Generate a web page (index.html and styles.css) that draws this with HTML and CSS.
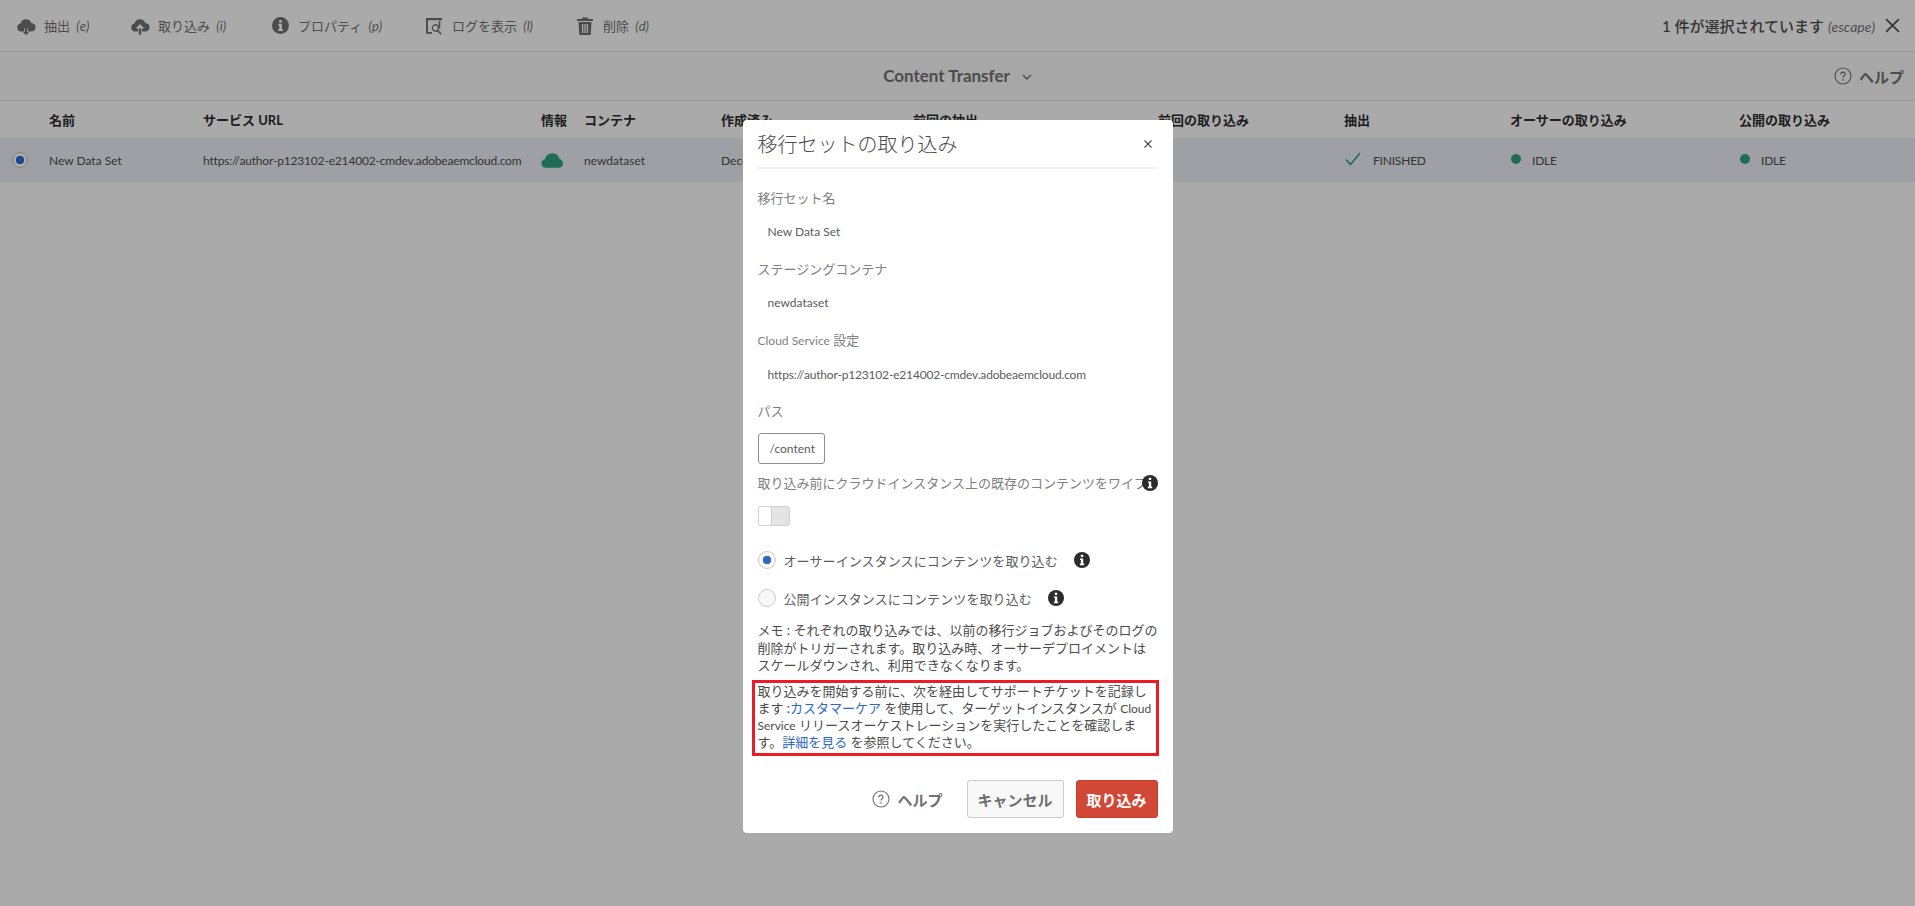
FILE: index.html
```html
<!DOCTYPE html>
<html lang="ja">
<head>
    <meta charset="UTF-8">
    <title>Content Transfer</title>
    <link rel="stylesheet" href="styles.css">
</head>
<body>
    <svg class="defs" width="0" height="0">
        <symbol id="info" viewBox="0 0 16 16">
            <circle cx="8" cy="8" r="8" fill="currentColor"/>
            <path fill="#fff" d="M6.8 2.8h2.4v2.3H6.8zM6 6.4h3.2v5.2h1v1.6H5.9v-1.6h1V8H6z"/>
        </symbol>
        <symbol id="help" viewBox="0 0 18 18">
            <circle cx="9" cy="9" r="8" fill="none" stroke="currentColor" stroke-width="1.1"/>
            <path fill="none" stroke="currentColor" stroke-width="1.2" d="M6.9 7.2c0-1.3 1-2.1 2.1-2.1s2.1.8 2.1 2c0 1.700-2.100 1.700-2.100 3.500"/>
            <circle cx="9" cy="12.900" r=".8" fill="currentColor"/>
        </symbol>
    </svg>

    <div class="toolbar">
        <div class="tool tool-extract">
            <svg class="tool-icon" viewBox="0 0 20 20"><path d="M5 15.500a4 4 0 0 1-.6-7.900 5.700 5.700 0 0 1 11-.3 4.100 4.100 0 0 1 .1 8.200h-3.500v-3h-4v3z"/><path d="M8.800 11.500h2.400v4.400h2l-3.200 3.400-3.200-3.400h2z"/></svg>
            <span>抽出 <i>(e)</i></span>
        </div>
        <div class="tool tool-ingest">
            <svg class="tool-icon" viewBox="0 0 20 20"><path d="M5 15.500a4 4 0 0 1-.6-7.900 5.700 5.700 0 0 1 11-.3 4.100 4.100 0 0 1 .1 8.200h-3.600v-3h2.400L10 8l-4.300 4.500h2.400v3z"/><path d="M8.800 12.500h2.400v6.300H8.800z"/></svg>
            <span>取り込み <i>(i)</i></span>
        </div>
        <div class="tool tool-props">
            <svg class="tool-icon info-tool"><use href="#info"/></svg>
            <span>プロパティ <i>(p)</i></span>
        </div>
        <div class="tool tool-log">
            <svg class="tool-icon" viewBox="0 0 20 20"><path d="M2 2h16v2.200H4V16h4v1.800H2z"/><path d="M16.300 5v7h-1.600V5z"/><path fill-rule="evenodd" d="M11.500 8a4 4 0 0 1 3.200 6.400l3.100 3.100-1.200 1.200-3.100-3.100A4 4 0 1 1 11.500 8zm0 1.600a2.400 2.400 0 1 0 0 4.800 2.400 2.400 0 0 0 0-4.800z"/></svg>
            <span>ログを表示 <i>(l)</i></span>
        </div>
        <div class="tool tool-delete">
            <svg class="tool-icon" viewBox="0 0 20 20"><path d="M7 1.500h6V3h5v2H2V3h5z"/><path fill-rule="evenodd" d="M3.500 6h13l-.8 13H4.300zM7 8v9h1.300V8zm2.400 0v9h1.200V8zm2.300 0v9H13V8z"/></svg>
            <span>削除 <i>(d)</i></span>
        </div>
        <div class="selection">
            <span><b>1 件が選択されています</b> <i>(escape)</i></span>
            <svg class="close-icon" viewBox="0 0 14 14"><path d="M1 1l12 12M13 1L1 13" fill="none" stroke="currentColor" stroke-width="1.600"/></svg>
        </div>
    </div>

    <div class="titlebar">
        <div class="page-title">
            Content Transfer
            <svg class="chevron" viewBox="0 0 10 6"><path d="M1 1l4 4 4-4" fill="none" stroke="currentColor" stroke-width="1.400"/></svg>
        </div>
        <div class="page-help">
            <svg class="help-icon"><use href="#help"/></svg>
            <b>ヘルプ</b>
        </div>
    </div>

    <div class="table-row table-head">
        <div>名前</div>
        <div>サービス URL</div>
        <div>情報</div>
        <div>コンテナ</div>
        <div>作成済み</div>
        <div>前回の抽出</div>
        <div>前回の取り込み</div>
        <div>抽出</div>
        <div>オーサーの取り込み</div>
        <div>公開の取り込み</div>
    </div>
    <div class="table-row table-selected">
        <span class="row-radio"></span>
        <div>New Data Set</div>
        <div class="url">https://author-p123102-e214002-cmdev.adobeaemcloud.com</div>
        <div class="cloud-cell">
            <svg class="cloud" viewBox="0 0 22 14"><path d="M4.500 14a4.200 4.200 0 0 1-.8-8.300A7.200 7.200 0 0 1 11 0a6.800 6.800 0 0 1 6.700 5.600A4.300 4.300 0 0 1 17.500 14z"/></svg>
        </div>
        <div>newdataset</div>
        <div>December</div>
        <div></div>
        <div></div>
        <div class="status">
            <svg class="check" viewBox="0 0 16 14"><path d="M1 7.500l4.500 5L15 1" fill="none" stroke="currentColor" stroke-width="1.600"/></svg>
            FINISHED
        </div>
        <div class="status"><span class="dot"></span>IDLE</div>
        <div class="status"><span class="dot"></span>IDLE</div>
    </div>

    <div class="overlay">
        <div class="modal">
            <div class="modal-head">
                <h2>移行セットの取り込み</h2>
                <svg class="modal-close" viewBox="0 0 10 10"><path d="M1.500 1.500l7 7M8.500 1.500l-7 7" fill="none" stroke="currentColor" stroke-width="1.100"/></svg>
            </div>

            <div class="field">
                <label>移行セット名</label>
                <div class="value">New Data Set</div>
            </div>
            <div class="field">
                <label>ステージングコンテナ</label>
                <div class="value">newdataset</div>
            </div>
            <div class="field">
                <label><small>Cloud Service</small> 設定</label>
                <div class="value url">https://author-p123102-e214002-cmdev.adobeaemcloud.com</div>
            </div>

            <label class="path-label">パス</label>
            <div class="path-input">/content</div>

            <div class="wipe-row">
                <label>取り込み前にクラウドインスタンス上の既存のコンテンツをワイプ</label>
                <svg class="info-icon"><use href="#info"/></svg>
            </div>
            <div class="toggle"><span></span></div>

            <div class="radio-row radio-author">
                <span class="radio radio-on"></span>
                <span>オーサーインスタンスにコンテンツを取り込む</span>
                <svg class="info-icon"><use href="#info"/></svg>
            </div>
            <div class="radio-row radio-publish">
                <span class="radio"></span>
                <span>公開インスタンスにコンテンツを取り込む</span>
                <svg class="info-icon"><use href="#info"/></svg>
            </div>

            <p class="memo">メモ : それぞれの取り込みでは、以前の移行ジョブおよびそのログの<br>削除がトリガーされます。取り込み時、オーサーデプロイメントは<br>スケールダウンされ、利用できなくなります。</p>
            <p class="notice">取り込みを開始する前に、次を経由してサポートチケットを記録し<br>ます :<a>カスタマーケア</a> を使用して、ターゲットインスタンスが <small>Cloud</small><br><small>Service</small> リリースオーケストレーションを実行したことを確認しま<br>す。<a>詳細を見る</a> を参照してください。</p>

            <div class="modal-foot">
                <div class="foot-help">
                    <svg class="help-icon"><use href="#help"/></svg>
                    <b>ヘルプ</b>
                </div>
                <button class="btn-cancel">キャンセル</button>
                <button class="btn-primary">取り込み</button>
            </div>
        </div>
    </div>
</body>
</html>
```

FILE: styles.css
```css
body {
    margin: 0;
    height: 906px;
    overflow: hidden;
    background-color: #f4f4f4;
    color: #2c2c2c;
    font-family: Lato, 'Noto Sans CJK JP', sans-serif;
    font-size: 13px;
}

.defs {
    display: block;
    height: 0;
}

small {
    font-size: 12px;
}

.url {
    letter-spacing: -0.180px;
}

/* toolbar */
.toolbar {
    display: flex;
    align-items: center;
    height: 51px;
    border-bottom: 1px solid #d8d8d8;
    color: #6e6e6e;
}

.tool {
    display: flex;
    align-items: center;
    gap: 8px;
    white-space: nowrap;
}

.tool-extract { margin-left: 16px; width: 114px; }
.tool-ingest { width: 140px; }
.tool-props { width: 154px; }
.tool-log { width: 151px; }

.tool i {
    margin-left: 3px;
}

.tool-icon {
    width: 20px;
    height: 20px;
    fill: currentColor;
}

.info-tool {
    width: 17px;
    height: 17px;
    margin: 0 1.500px;
}

.selection {
    display: flex;
    align-items: center;
    gap: 10px;
    margin-left: auto;
    margin-right: 15px;
    font-size: 15px;
}

.selection b {
    font-weight: 500;
    color: #4b4b4b;
}

.selection i {
    font-size: 14px;
    color: #6e6e6e;
}

.close-icon {
    width: 15px;
    height: 15px;
    color: #4b4b4b;
}

/* title bar */
.titlebar {
    position: relative;
    display: flex;
    justify-content: center;
    align-items: center;
    height: 48px;
    border-bottom: 1px solid #d8d8d8;
    background-color: #f0f0f0;
}

.page-title {
    display: flex;
    align-items: center;
    gap: 12px;
    padding-bottom: 2px;
    font-size: 17px;
    font-weight: 700;
    color: #6e6e6e;
}

.chevron {
    width: 10px;
    height: 6px;
    margin-top: 3px;
}

.page-help {
    position: absolute;
    right: 11px;
    display: flex;
    align-items: center;
    gap: 7px;
    color: #6e6e6e;
    font-size: 15px;
}

.help-icon {
    width: 18px;
    height: 18px;
}

/* table */
.table-row {
    position: relative;
    display: grid;
    grid-template-columns: 154px 338px 43px 137px 192px 245px 186px 166px 229px 1fr;
    align-items: center;
    padding-left: 49px;
    white-space: nowrap;
}

.table-head {
    height: 37px;
    font-weight: 700;
    color: #2c2c2c;
}

.table-selected {
    height: 44px;
    background-color: #e2e6ec;
    font-size: 12px;
    color: #4b4b4b;
}

.row-radio {
    position: absolute;
    left: 12px;
    top: 14px;
    width: 16px;
    height: 16px;
    box-sizing: border-box;
    border: 1px solid #bbb;
    border-radius: 50%;
    background: radial-gradient(circle, #2b68c8 0 4px, #f4f4f4 4.500px);
}

.cloud {
    display: block;
    width: 23px;
    height: 15px;
    fill: #2d9d78;
}

.status {
    display: flex;
    align-items: center;
    letter-spacing: -0.200px;
}

.check {
    width: 16px;
    height: 14px;
    margin: -3px 12px 0 1px;
    color: #2d9d78;
}

.dot {
    width: 10px;
    height: 10px;
    margin: -3px 11px 0 1px;
    border-radius: 50%;
    background-color: #2d9d78;
}

/* modal */
.overlay {
    position: absolute;
    top: 0;
    left: 0;
    right: 0;
    bottom: 0;
    display: flex;
    justify-content: center;
    align-items: flex-start;
    padding-top: 120px;
    background-color: rgba(0, 0, 0, 0.3);
}

.modal {
    width: 400px;
    padding: 0 15px 15px;
    border-radius: 4px;
    background-color: #fff;
    color: #707070;
}

.modal-head {
    display: flex;
    align-items: center;
    justify-content: space-between;
    height: 47px;
    margin-bottom: 19px;
    border-bottom: 2px solid #f0f0f0;
}

.modal-head h2 {
    margin: 0;
    font-size: 20px;
    font-weight: 300;
    color: #4b4b4b;
}

.modal-close {
    width: 10px;
    height: 10px;
    margin-right: 5px;
    color: #4b4b4b;
}

.field {
    margin-bottom: 17px;
}

.field label,
.path-label,
.wipe-row label {
    display: block;
    line-height: 20px;
    color: #808080;
}

.path-label {
    margin-top: -1px;
}

.value {
    margin-top: 14px;
    padding-left: 10px;
    line-height: 20px;
    font-size: 12px;
    color: #5c5c5c;
}

.path-input {
    box-sizing: border-box;
    width: 67px;
    height: 31px;
    margin-top: 12px;
    padding-left: 11px;
    border: 1px solid #8e8e8e;
    border-radius: 3px;
    line-height: 29px;
    font-size: 12px;
    color: #5c5c5c;
}

.wipe-row {
    display: flex;
    align-items: center;
    margin-top: 9px;
}

.wipe-row label {
    flex: 1;
    min-width: 0;
    white-space: nowrap;
}

.info-icon {
    position: relative;
    flex: none;
    width: 16px;
    height: 16px;
    color: #2c2c2c;
}

.toggle {
    box-sizing: border-box;
    width: 32px;
    height: 20px;
    margin-top: 13px;
    border: 1px solid #d0d0d0;
    border-radius: 3px;
    background-color: #e4e4e4;
}

.toggle span {
    display: block;
    width: 12px;
    height: 18px;
    border-right: 1px solid #d0d0d0;
    border-radius: 3px;
    background-color: #fff;
}

.radio-row {
    display: flex;
    align-items: center;
    height: 20px;
    color: #5c5c5c;
}

.radio-author { margin-top: 24px; }
.radio-publish { margin-top: 18px; }

.radio-row span:nth-child(2) {
    margin-left: 8px;
    margin-right: 16px;
    letter-spacing: 0.100px;
}

.radio {
    box-sizing: border-box;
    width: 18px;
    height: 18px;
    border: 1px solid #ccc;
    border-radius: 50%;
    background-color: #f8f8f8;
}

.radio-on {
    background: radial-gradient(circle, #2b68c8 0 4px, #f8f8f8 4.500px);
}

.memo {
    margin: 14px 0 0;
    line-height: 17.500px;
    white-space: nowrap;
    color: #4b4b4b;
}

.notice {
    box-sizing: border-box;
    width: 407px;
    margin: 5px 0 0 -6px;
    padding: 0 0 2px 3px;
    border: 3px solid #ed1c24;
    line-height: 17.200px;
    white-space: nowrap;
    color: #4b4b4b;
}

.notice a {
    color: #2b68c8;
}

.modal-foot {
    display: flex;
    align-items: center;
    justify-content: flex-end;
    margin-top: 24px;
}

.foot-help {
    display: flex;
    align-items: center;
    gap: 7px;
    margin-right: 24px;
    font-size: 15px;
    color: #707070;
}

button {
    height: 38px;
    border-radius: 3px;
    font-family: inherit;
    font-size: 15px;
    font-weight: 700;
}

.btn-cancel {
    width: 97px;
    margin-right: 12px;
    padding: 0;
    border: 1px solid #ccc;
    background-color: #f8f8f8;
    color: #6e6e6e;
}

.btn-primary {
    width: 82px;
    padding: 0;
    border: 1px solid #c63d30;
    background-color: #d14836;
    color: #fff;
}
```
